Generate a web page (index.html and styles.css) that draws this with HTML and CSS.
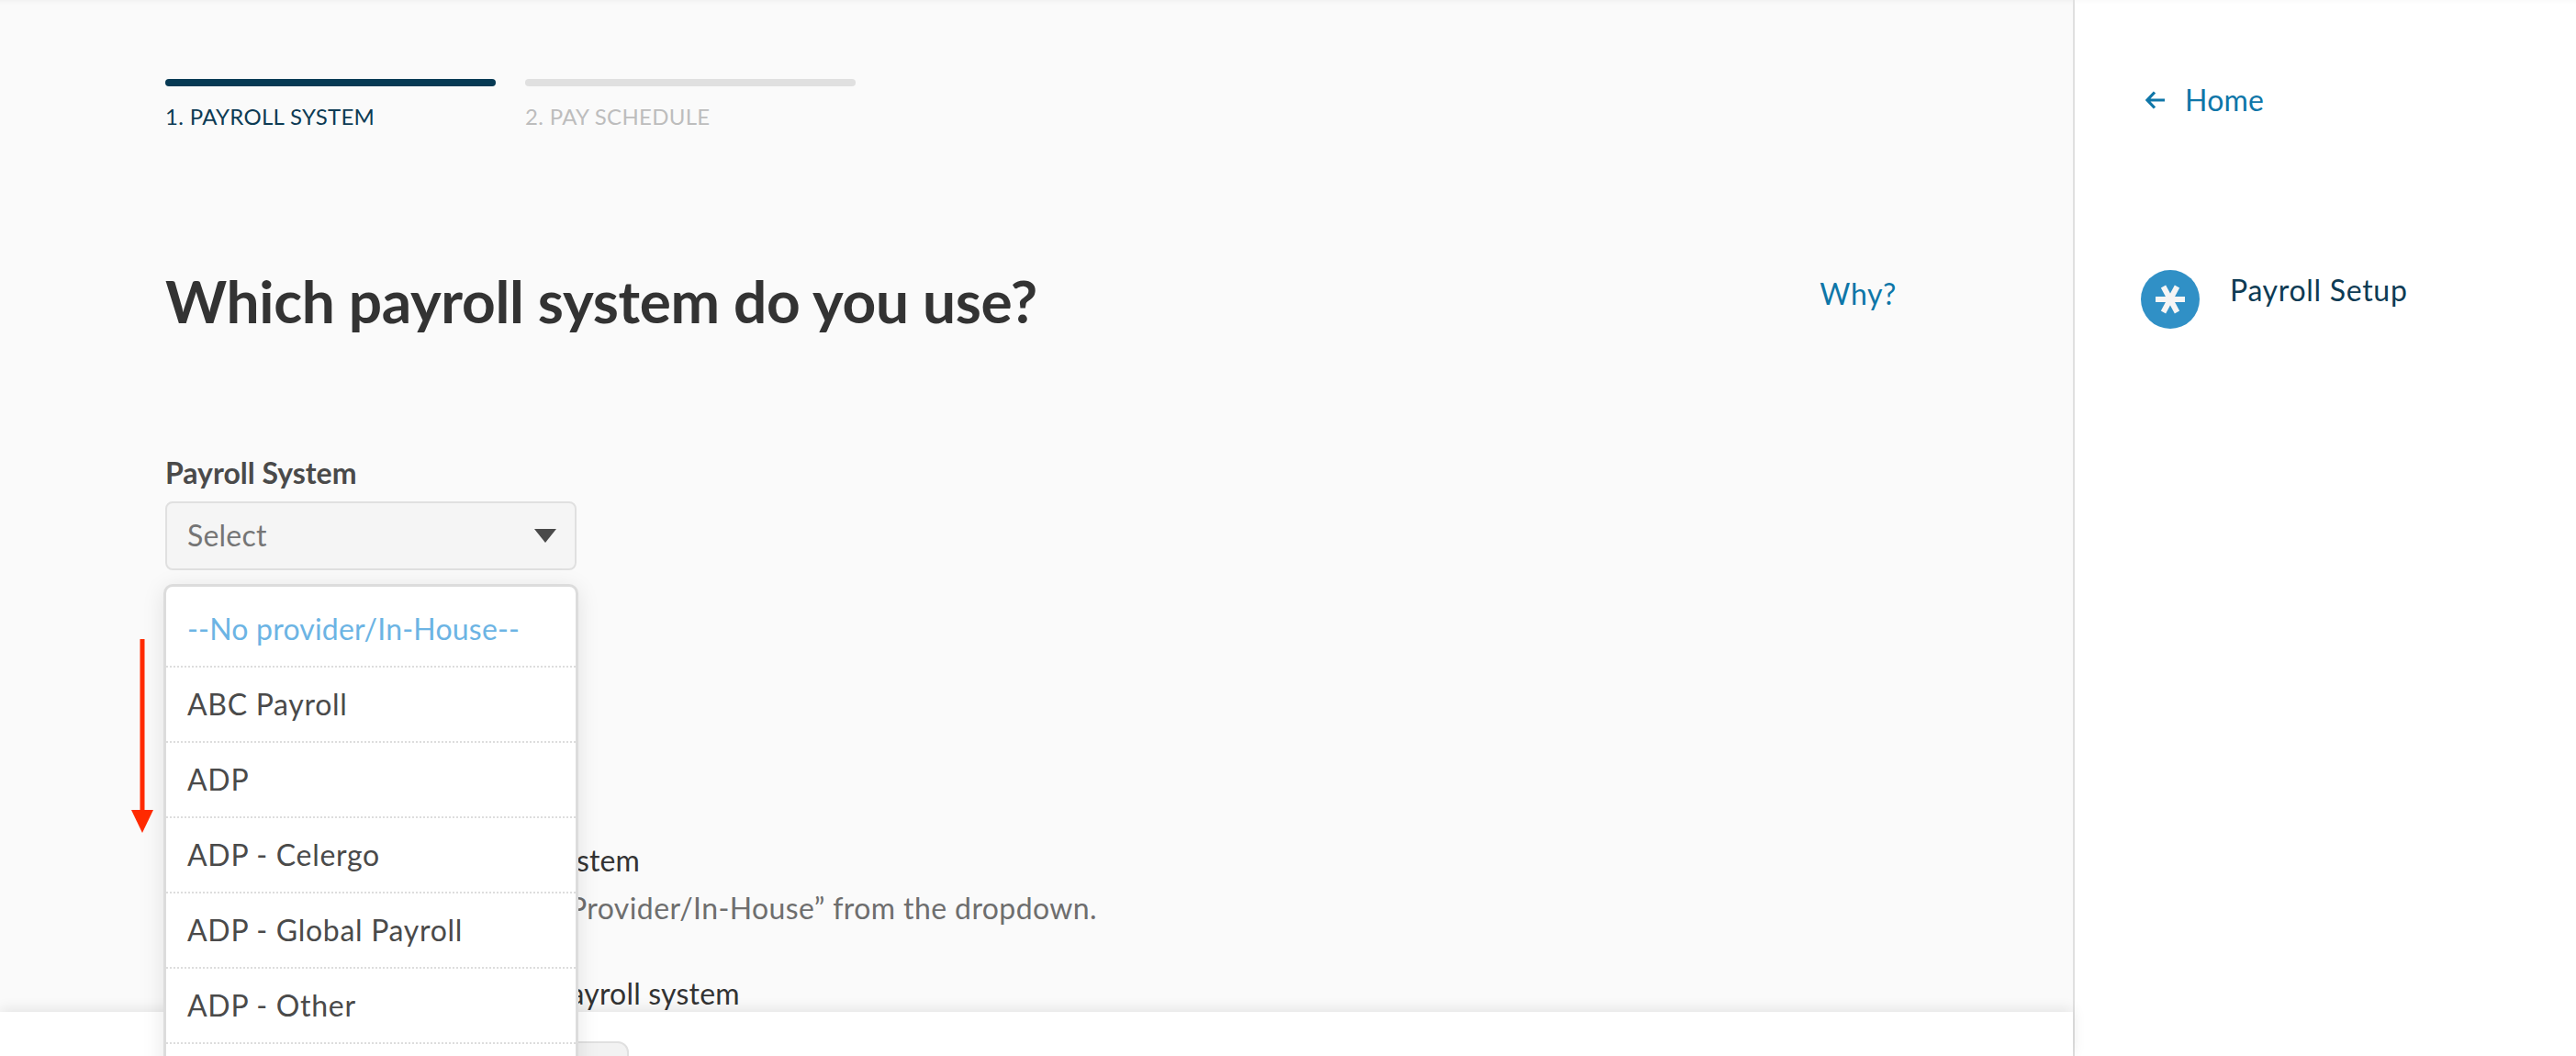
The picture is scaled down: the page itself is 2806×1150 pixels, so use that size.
FILE: index.html
```html
<!DOCTYPE html>
<html lang="en">
<head>
  <meta charset="UTF-8" />
  <meta name="viewport" content="width=device-width, initial-scale=1.0" />
  <title>Payroll Setup</title>
  <link rel="stylesheet" href="styles.css">
</head>
<body>
  <div class="shell">

    <!-- Main column -->
    <div class="main">
      <div class="content">
        <div class="stepper">
          <div class="step active">
            <div class="step-bar"></div>
            <div class="step-label">1. PAYROLL SYSTEM</div>
          </div>
          <div class="step">
            <div class="step-bar"></div>
            <div class="step-label">2. PAY SCHEDULE</div>
          </div>
        </div>

        <div class="title-row">
          <h1 class="page-title">Which payroll system do you use?</h1>
          <a class="why-link" href="#">Why?</a>
        </div>

        <label class="field-label">Payroll System</label>
        <div class="select-field">
          <div class="select-box">
            <span>Select</span>
            <span class="caret"></span>
          </div>

          <!-- Open dropdown -->
          <ul class="dropdown">
            <li class="option-none">--No provider/In-House--</li>
            <li>ABC Payroll</li>
            <li>ADP</li>
            <li>ADP - Celergo</li>
            <li>ADP - Global Payroll</li>
            <li>ADP - Other</li>
            <li>ADP - TotalSource</li>
          </ul>
        </div>

        <div class="help-title first">I don't see my current payroll system</div>
        <div class="help-text">Not listed? Please choose “No Provider/In-House” from the dropdown.</div>
        <div class="help-title second">My company does not have a payroll system</div>
      </div>

      <div class="footer">
        <button class="next-btn" disabled></button>
      </div>
    </div>

    <!-- Sidebar -->
    <div class="sidebar">
      <a class="home-link" href="#">
        <svg class="home-arrow" width="21" height="20" viewBox="0 0 21 20">
          <path d="M10 1.5 L2 10 L10 18.5 M2 10 H21" fill="none" stroke="currentColor" stroke-width="3.2"/>
        </svg>
        Home
      </a>
      <div class="side-item">
        <svg class="side-icon" width="64" height="64" viewBox="0 0 64 64">
          <circle cx="32" cy="32" r="32" fill="#3090c6"/>
          <path d="M16 32 H48 M24.5 18 L39.5 46 M39.5 18 L24.5 46" fill="none" stroke="#f5f5f5" stroke-width="6"/>
        </svg>
        <span>Payroll Setup</span>
      </div>
    </div>

    <!-- Red annotation arrow -->
    <svg class="annotation" width="26" height="212" viewBox="0 0 26 212">
      <path d="M13 0 V188" stroke="#ff2a00" stroke-width="5"/>
      <path d="M1 186 H25 L13 211 Z" fill="#ff2a00"/>
    </svg>
  </div>
</body>
</html>
```

FILE: styles.css
```css
:root {
  --navy: #0d3b54;
  --link: #0e76a8;
  --text: #4a4a4a;
  --line: #e0e0e0;
}

* {
  box-sizing: border-box;
  margin: 0;
  padding: 0;
}

html, body {
  height: 100%;
  font-family: Lato, "Open Sans", sans-serif;
  background-color: #ffffff;
}

.shell {
  display: flex;
  height: 1150px;
  overflow: hidden;
  position: relative;
}

.main {
  flex: 1;
  display: flex;
  flex-direction: column;
  background-color: #fafafa;
  box-shadow: inset 0 5px 5px -4px rgba(0,0,0,0.05);
}

.content {
  flex: 1;
  min-height: 0;
  padding: 86px 192px 0 180px;
}

.stepper {
  display: flex;
  gap: 32px;
}

.step {
  width: 360px;
}

.step-bar {
  height: 8px;
  border-radius: 4px;
  background-color: var(--line);
}

.step-label {
  margin-top: 17px;
  font-size: 24px;
  line-height: 32px;
  letter-spacing: 0.3px;
  color: #bdbdbd;
}

.step.active .step-bar {
  background-color: #063a54;
}

.step.active .step-label {
  color: var(--navy);
}

.title-row {
  display: flex;
  justify-content: space-between;
  align-items: flex-start;
  margin-top: 145px;
}

.page-title {
  font-size: 64px;
  line-height: 80px;
  font-weight: 700;
  letter-spacing: -0.33px;
  color: #333333;
}

.why-link {
  margin-top: 10px;
  font-size: 32px;
  line-height: 44px;
  letter-spacing: 0.6px;
  color: var(--link);
  text-decoration: none;
}

.field-label {
  display: block;
  margin-top: 127px;
  font-size: 32px;
  line-height: 40px;
  font-weight: 700;
  color: var(--text);
}

.select-field {
  position: relative;
  margin-top: 11px;
  width: 448px;
}

.select-box {
  display: flex;
  align-items: center;
  justify-content: space-between;
  height: 75px;
  padding: 0 20px 3px 22px;
  border: 2px solid var(--line);
  border-radius: 8px;
  background-color: #f5f5f5;
  font-size: 32px;
  letter-spacing: 0.2px;
  color: #757575;
}

.caret {
  width: 0;
  height: 0;
  margin-top: 3px;
  border-left: 12px solid transparent;
  border-right: 12px solid transparent;
  border-top: 15px solid var(--text);
}

.dropdown {
  position: absolute;
  top: 90px;
  left: -2px;
  width: 452px;
  z-index: 5;
  list-style: none;
  padding-top: 6px;
  background-color: #ffffff;
  border: 3px solid #dcdcdc;
  border-bottom: none;
  border-radius: 10px 10px 0 0;
  box-shadow: 0 4px 24px rgba(0,0,0,0.1);
}

.dropdown li {
  height: 82px;
  line-height: 80px;
  padding-left: 23px;
  font-size: 32px;
  letter-spacing: 0.7px;
  color: var(--text);
  border-bottom: 2px dotted #dddddd;
}

.dropdown .option-none {
  letter-spacing: 0.2px;
  color: #6cb4e4;
}

.help-title {
  font-size: 32px;
  line-height: 44px;
  letter-spacing: 0.1px;
  color: #333333;
}

.help-title.first {
  margin-top: 294px;
}

.help-title.second {
  margin-top: 49px;
  letter-spacing: 0.2px;
}

.help-text {
  margin-top: 8px;
  font-size: 32px;
  line-height: 44px;
  letter-spacing: 0.4px;
  color: #6e6e6e;
}

.footer {
  position: relative;
  z-index: 1;
  height: 48px;
  padding: 32px 0 0 400px;
  background-color: #ffffff;
  box-shadow: 0 -3px 14px rgba(0,0,0,0.09);
}

.next-btn {
  display: block;
  width: 285px;
  height: 80px;
  background-color: #f2f2f2;
  border: 2px solid var(--line);
  border-radius: 12px;
}

.sidebar {
  width: 548px;
  padding: 87px 0 0 72px;
  background-color: #ffffff;
  border-left: 2px solid var(--line);
  box-shadow: inset 0 5px 5px -4px rgba(0,0,0,0.03);
}

.home-link {
  display: flex;
  align-items: center;
  gap: 22px;
  padding-left: 5px;
  font-size: 32px;
  line-height: 44px;
  letter-spacing: 0.2px;
  color: var(--link);
  text-decoration: none;
}

.side-item {
  display: flex;
  align-items: flex-start;
  gap: 33px;
  margin-top: 163px;
  font-size: 32px;
  line-height: 44px;
  letter-spacing: 0.7px;
  color: var(--navy);
}

.side-icon {
  flex-shrink: 0;
}

.annotation {
  position: absolute;
  left: 142px;
  top: 696px;
  z-index: 6;
}
```
